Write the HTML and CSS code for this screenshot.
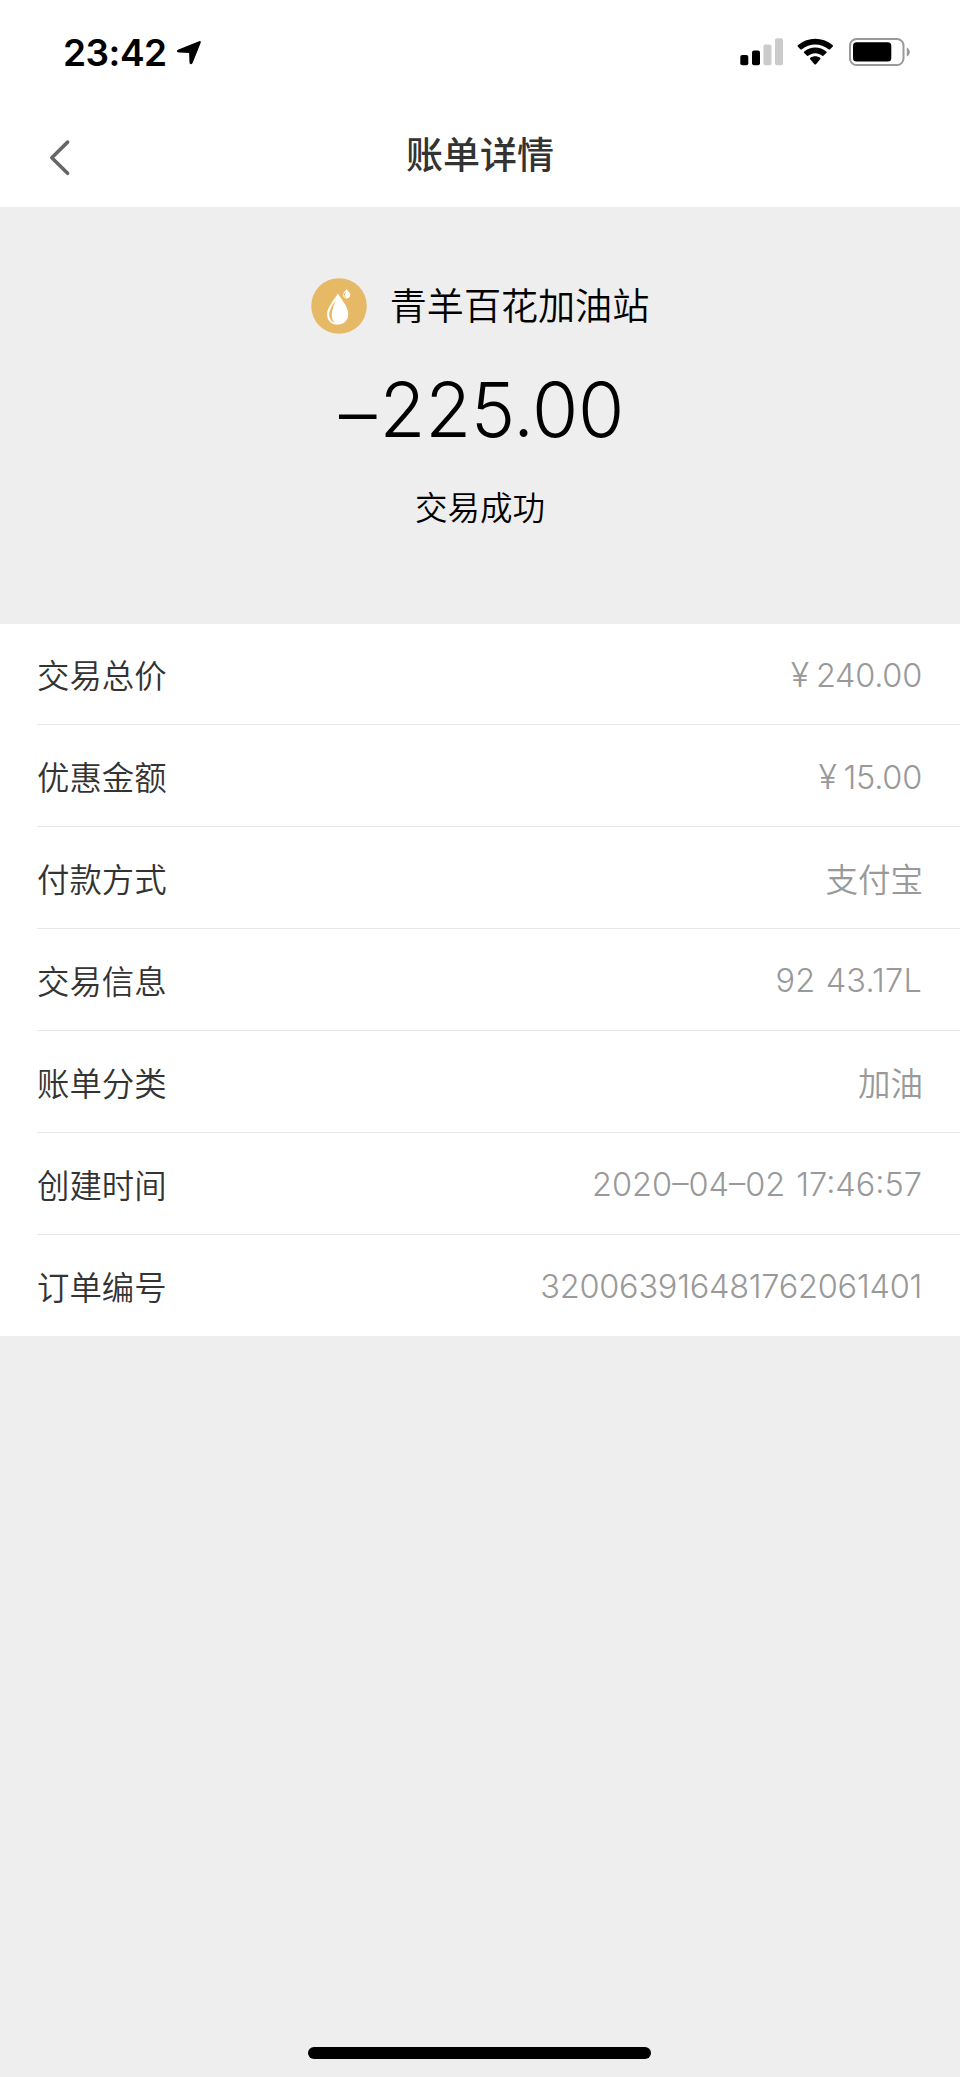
FILE: index.html
```html
<!DOCTYPE html>
<html lang="zh-CN">
<head>
<meta charset="utf-8">
<title>账单详情</title>
<link rel="stylesheet" href="styles.css">
</head>
<body>
<div class="screen">
  <div class="status-bar">
    <div class="clock">
      <span class="time">23:42</span>
      <svg class="location" width="26" height="26" viewBox="0 0 26 26"><path d="M23 1.2Q25.500 .3 24.600 3L16.800 22.600Q15.800 25 14.400 24Q13.500 23.500 13.500 22.500L13.100 12.900L3 12.500Q1 12.400 .8 11.300Q.8 10.300 2.500 9.600Z"/></svg>
    </div>
    <div class="indicators">
      <svg width="43" height="28" viewBox="0 0 43 28">
        <rect x="0.300" y="17" width="8" height="10.300" rx="2"/>
        <rect x="12" y="12.400" width="8" height="14.900" rx="2"/>
        <rect class="off" x="23.500" y="6.500" width="8" height="20.800" rx="2"/>
        <rect class="off" x="35" y="0.300" width="8" height="27" rx="2"/>
      </svg>
      <svg class="wifi" width="37" height="28" viewBox="0 0 38 28">
        <path d="M1 8.700Q0 7.700 1.200 6.800C11.500-1.900 26-1.900 36.500 6.800Q37.400 7.700 36.500 8.700L34 11.200Q33.200 11.900 32.400 11.200C24.500 4.700 12.800 4.700 5 11.200Q4.200 11.900 3.400 11.200Z"/>
        <path d="M7.400 15.100Q6.500 14.200 7.500 13.400C14 8 23.500 8 30 13.400Q31 14.200 30.100 15.100L27.400 17.700Q26.700 18.300 26 17.800C21.800 14.300 15.700 14.300 11.500 17.800Q10.800 18.300 10 17.700Z"/>
        <path d="M13.600 21.500Q12.800 20.700 13.800 20C16.700 17.900 20.800 17.900 23.700 20Q24.600 20.700 23.800 21.500L19.500 26.500Q18.700 27.400 17.900 26.500Z"/>
      </svg>
      <svg class="battery" width="62" height="30" viewBox="0 0 62 30">
        <rect class="shell" x="1" y="2" width="53.500" height="26" rx="6.500"/>
        <rect x="4" y="5.300" width="38.300" height="19.200" rx="3.500"/>
        <path class="cap" d="M57.800 10.500C61.800 12.100 61.800 18.100 57.800 19.500Z"/>
      </svg>
    </div>
  </div>
  <div class="nav">
    <svg class="back" width="22" height="38" viewBox="0 0 22 38"><path d="M18.600 3.100L2.800 18.700L18.600 34.300"/></svg>
    <h1 class="title">账单详情</h1>
  </div>
  <div class="summary">
    <div class="merchant">
      <svg class="fuel" width="56" height="56" viewBox="0 0 56 56">
        <circle class="disc" cx="28" cy="28" r="27.800"/>
        <path class="drop" d="M26.800 15.500C29.500 20 37.300 28.500 37.300 36C37.300 42.500 32.800 46.600 26.600 46.600C20.400 46.600 16 42.500 16 36.200C16 29.500 23.800 21 26.800 15.500Z"/>
        <path class="shade" d="M24.700 22.500C22 26.500 18.200 31.500 18.200 36.300C18.200 40.800 20.500 43.600 24 45C21.500 42.600 20.500 39.500 20.800 35.500C21.100 31 23.400 27 24.700 22.500Z"/>
        <path class="drop" d="M35.600 11C36.700 13 39.200 14.500 39.200 17C39.200 19.300 37.700 20.500 35.700 20.500C33.700 20.500 32 19.300 32 17C32 14.500 34.500 13 35.600 11Z"/>
        <path class="shade-line" d="M34.700 14.200C32.800 16.600 32.900 18.400 34.800 19.500"/>
      </svg>
      <span class="merchant-name">青羊百花加油站</span>
    </div>
    <div class="amount"><span class="sign">–</span>225.00</div>
    <div class="state">交易成功</div>
  </div>
  <div class="details">
    <div class="row"><span class="label">交易总价</span><span class="value"><span class="yen">¥</span>240.00</span></div>
    <div class="row"><span class="label">优惠金额</span><span class="value"><span class="yen">¥</span>15.00</span></div>
    <div class="row"><span class="label">付款方式</span><span class="value han">支付宝</span></div>
    <div class="row"><span class="label">交易信息</span><span class="value fuel-info">92 43.17L</span></div>
    <div class="row"><span class="label">账单分类</span><span class="value han">加油</span></div>
    <div class="row"><span class="label">创建时间</span><span class="value date">2020–04–02 17:46:57</span></div>
    <div class="row"><span class="label">订单编号</span><span class="value order">320063916481762061401</span></div>
  </div>
  <div class="home-bar"></div>
</div>
</body>
</html>
```
FILE: styles.css
```css
* { box-sizing: border-box; }
body {
  margin: 0;
  background: #eee;
  color: #000;
  font-family: Inter, "Noto Sans CJK SC", sans-serif;
}
svg { display: block; flex: none; }
.screen {
  width: 960px;
  height: 2077px;
  display: flex;
  flex-direction: column;
  background: #eee;
}
.status-bar {
  height: 104px;
  flex: none;
  background: #fff;
  display: flex;
  justify-content: space-between;
  align-items: flex-start;
  padding: 33px 49px 0 63px;
}
.clock { display: flex; }
.time {
  font-size: 37px;
  line-height: 40px;
  font-weight: 570;
  letter-spacing: -0.500px;
  width: 113px;
  white-space: nowrap;
}
.location { margin-top: 7px; }
.indicators { display: flex; padding-top: 5px; }
.off { fill: #cbcbcb; }
.wifi { margin-left: 14px; }
.battery { margin-left: 15px; margin-top: -1px; }
.shell { fill: none; stroke: #999; stroke-width: 2; }
.cap { fill: #999; }
.nav {
  height: 103px;
  flex: none;
  background: #fff;
  display: grid;
  grid-template-columns: 110px 1fr 110px;
  align-items: start;
}
.back { margin: 35px 0 0 49px; }
.back path {
  fill: none;
  stroke: #666;
  stroke-width: 3.600;
  stroke-linecap: round;
  stroke-linejoin: round;
}
.title {
  margin: 25px 0 0;
  text-align: center;
  font-size: 37px;
  line-height: 54px;
  font-weight: 500;
  color: #333;
}
.summary {
  height: 417px;
  flex: none;
  display: flex;
  flex-direction: column;
  align-items: center;
  padding-top: 71px;
}
.merchant { display: flex; align-items: flex-start; gap: 23px; }
.disc { fill: #e6b967; }
.drop { fill: #fff; }
.shade { fill: #e6b967; }
.shade-line { fill: none; stroke: #e6b967; stroke-width: 1; }
.merchant-name { font-size: 37.100px; line-height: 56px; font-weight: 350; padding-top: 1px; }
.amount {
  margin-top: 30px;
  padding-left: 3px;
  font-size: 75px;
  line-height: 90px;
  font-weight: 350;
  letter-spacing: -0.300px;
}
.sign { letter-spacing: 3px; vertical-align: -3px; line-height: 1; }
.state { margin-top: 30px; font-size: 32.500px; line-height: 48px; font-weight: 350; }
.details { background: #fff; height: 712px; flex: none; padding-left: 37px; }
.row {
  height: 102px;
  display: flex;
  justify-content: space-between;
  align-items: center;
  padding-right: 38px;
  border-bottom: 1px solid #e8e8e8;
}
.row:first-child { height: 101px; }
.row:last-child { border-bottom: 0; height: 101px; }
.label { font-size: 32.400px; color: #333; font-weight: 350; padding-bottom: 1px; }
.row:first-child .label { padding-bottom: 2px; }
.value { font-size: 32.500px; color: #999; font-weight: 350; letter-spacing: -0.250px; padding-top: 1px; }
.han { letter-spacing: 0; padding: 0 0 1px; margin-right: -1px; }
.yen { margin-right: 7px; font-size: 34px; }
.fuel-info { letter-spacing: 0.200px; word-spacing: 1px; }
.date { letter-spacing: 0; word-spacing: 2px; }
.home-bar {
  width: 343px;
  height: 12px;
  border-radius: 6px;
  background: #000;
  margin: auto auto 18px 308px;
}
```
